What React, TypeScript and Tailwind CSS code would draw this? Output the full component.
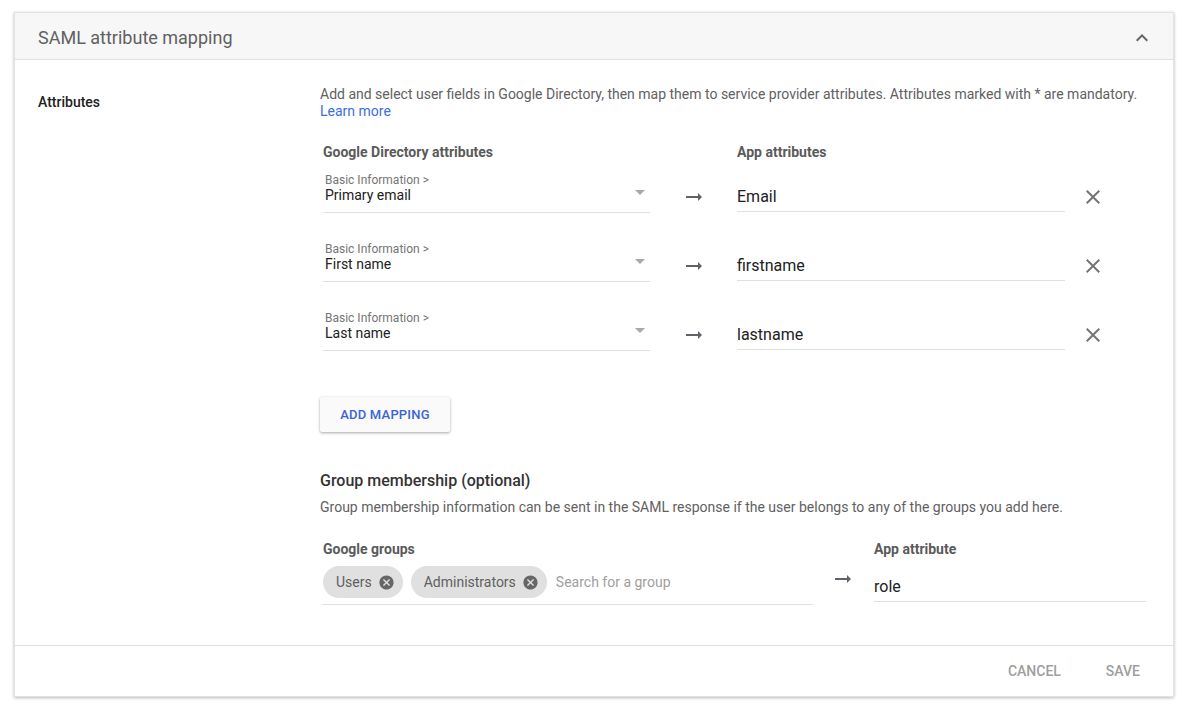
const font = { fontFamily: "Roboto, 'Noto Sans', Arial, sans-serif" };

const rows = [
  { field: "Primary email", app: "Email" },
  { field: "First name", app: "firstname" },
  { field: "Last name", app: "lastname" },
];

function ArrowRight() {
  return (
    <svg width="24" height="24" viewBox="0 0 24 24" className="fill-[#5f6368]">
      <path d="M16.01 11H4v2h12.01v3L20 12l-3.99-4z" />
    </svg>
  );
}

function CloseIcon() {
  return (
    <svg width="24" height="24" viewBox="0 0 24 24" className="fill-[#757575]">
      <path d="M19 6.41 17.59 5 12 10.59 6.41 5 5 6.41 10.59 12 5 17.59 6.41 19 12 13.41 17.59 19 19 17.59 13.41 12z" />
    </svg>
  );
}

function ChipClose() {
  return (
    <svg width="17" height="17" viewBox="0 0 24 24" className="fill-[#666]">
      <path d="M12 2C6.47 2 2 6.47 2 12s4.47 10 10 10 10-4.47 10-10S17.53 2 12 2zm5 13.59L15.59 17 12 13.41 8.41 17 7 15.59 10.59 12 7 8.41 8.41 7 12 10.59 15.59 7 17 8.41 13.41 12 17 15.59z" />
    </svg>
  );
}

function Chip({ label }: { label: string }) {
  return (
    <div className="flex items-center h-[32px] pl-[13px] pr-[8px] gap-[6px] rounded-full bg-[#e0e0e0] text-[14px] text-[#5f5f5f]">
      <span>{label}</span>
      <ChipClose />
    </div>
  );
}

export default function App() {
  return (
    <div className="min-h-[704px] bg-white pt-[12px] pl-[14px]" style={font}>
      <div className="w-[1160px] bg-white shadow-[0_1px_3px_rgba(0,0,0,0.28)] border border-[#e2e2e2]">
        {/* header */}
        <div className="h-[47px] bg-[#f7f7f7] border-b border-[#e0e0e0] flex items-center justify-between pl-[23px] pr-[19px] pt-[3px]">
          <span className="text-[18px] text-[#616161]">SAML attribute mapping</span>
          <svg width="24" height="24" viewBox="0 0 24 24" className="fill-[#5f6368]">
            <path d="M12 8l-6 6 1.41 1.41L12 10.83l4.59 4.58L18 14z" />
          </svg>
        </div>

        {/* body */}
        <div className="flex pt-[26px] pb-[40px]">
          <div className="w-[305px] pl-[23px] pt-[6px] text-[14px] font-medium text-[#212121]">Attributes</div>

          <div className="flex-1 pr-[24px]">
            <p className="text-[14px] leading-[17px] text-[#616161]">
              Add and select user fields in Google Directory, then map them to service provider attributes. Attributes marked with * are mandatory.{" "}
              <span className="text-[#3b6ee0]">Learn more</span>
            </p>

            <div className="pl-[3px] mt-[22px]">
              <div className="flex h-[20px] items-center text-[14px] font-bold text-[#5a5a5a]">
                <div className="w-[414px]">Google Directory attributes</div>
                <div>App attributes</div>
              </div>

              <div className="flex flex-col gap-[29px] mt-[11px]">
                {rows.map((r) => (
                  <div key={r.field} className="flex items-end">
                    <div className="w-[327px] border-b border-[#e0e0e0] pb-[8px] pl-[2px] flex items-center justify-between pr-[4px]">
                      <div>
                        <div className="text-[12px] leading-[14px] text-[#757575]">Basic Information &gt;</div>
                        <div className="text-[14px] leading-[17px] text-[#212121]">{r.field}</div>
                      </div>
                      <div className="w-0 h-0 border-l-[5px] border-r-[5px] border-t-[5px] border-l-transparent border-r-transparent border-t-[#a8a8a8] mr-[1px] mt-[8px]" />
                    </div>
                    <div className="w-[87px] flex justify-center pb-[4px] pl-[1px]">
                      <ArrowRight />
                    </div>
                    <div className="w-[328px] border-b border-[#e0e0e0] pb-[4px] text-[16px] leading-[20px] text-[#212121] mb-[1px]">
                      {r.app}
                    </div>
                    <div className="w-[56px] flex justify-center pb-[4px]">
                      <CloseIcon />
                    </div>
                  </div>
                ))}
              </div>
            </div>

            <button className="mt-[46px] h-[35px] w-[130px] bg-[#fafafa] rounded-[2px] shadow-[0_1px_3px_rgba(0,0,0,0.35)] text-[13px] font-medium text-[#3b63d8] tracking-[0.2px]">
              ADD MAPPING
            </button>

            <div className="mt-[39px] text-[16px] leading-[20px] font-medium text-[#333]">Group membership (optional)</div>
            <p className="mt-[6px] text-[14px] leading-[20px] text-[#616161]">
              Group membership information can be sent in the SAML response if the user belongs to any of the groups you add here.
            </p>

            <div className="flex pl-[2px] mt-[22px]">
              <div className="w-[491px]">
                <div className="pl-[1px] text-[14px] leading-[20px] font-bold text-[#5a5a5a]">Google groups</div>
                <div className="mt-[7px] flex items-center gap-[8px] border-b border-[#e0e0e0] pb-[6px] pl-[1px]">
                  <Chip label="Users" />
                  <Chip label="Administrators" />
                  <span className="ml-[1px] text-[14px] text-[#9e9e9e]">Search for a group</span>
                </div>
              </div>
              <div className="w-[61px] flex justify-center items-center pt-[28px] pb-[14px] pr-[2px]">
                <ArrowRight />
              </div>
              <div className="w-[272px]">
                <div className="text-[14px] leading-[20px] font-bold text-[#5a5a5a]">App attribute</div>
                <div className="mt-[18px] border-b border-[#e0e0e0] pb-[4px] text-[16px] leading-[20px] text-[#212121]">role</div>
              </div>
            </div>
          </div>
        </div>

        {/* footer */}
        <div className="h-[51px] border-t border-[#e0e0e0] flex items-center justify-end gap-[45px] pr-[33px] text-[14px] font-medium text-[#9e9e9e]">
          <span>CANCEL</span>
          <span>SAVE</span>
        </div>
      </div>
    </div>
  );
}
